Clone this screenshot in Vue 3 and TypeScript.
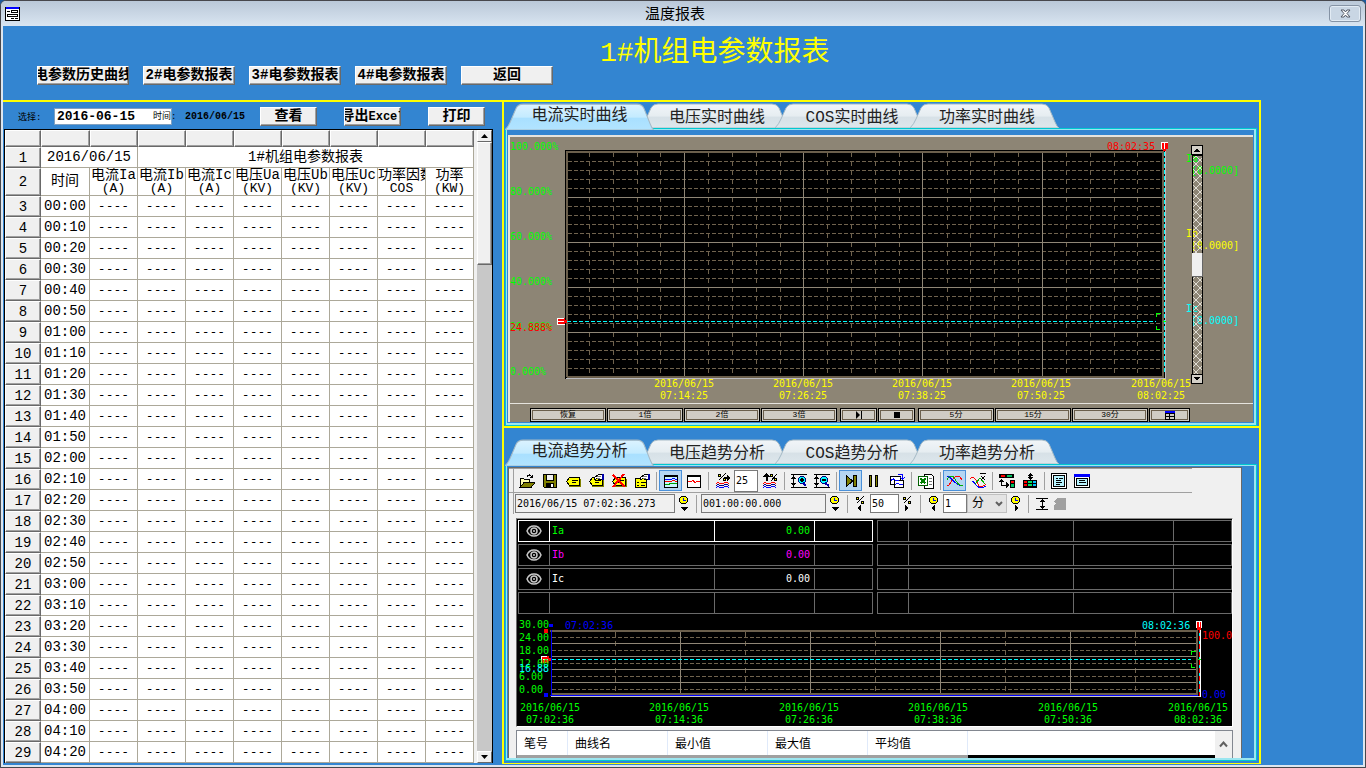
<script setup lang="ts">
import { ref } from 'vue'

type Shape = { d: string; f?: string; s?: string; w?: number }

const navButtons = ['电参数历史曲线', '2#电参数报表', '3#电参数报表', '4#电参数报表', '返回']
const columns = [
  ['电流Ia', '(A)'], ['电流Ib', '(A)'], ['电流Ic', '(A)'],
  ['电压Ua', '(KV)'], ['电压Ub', '(KV)'], ['电压Uc', '(KV)'],
  ['功率因数', 'COS'], ['功率', '(KW)'],
]
const rows = Array.from({ length: 27 }, (_, i) => {
  const h = String(Math.floor(i / 6)).padStart(2, '0')
  return { no: i + 3, time: `${h}:${i % 6}0` }
})

const liveTabs = ['电流实时曲线', '电压实时曲线', 'COS实时曲线', '功率实时曲线']
const trendTabs = ['电流趋势分析', '电压趋势分析', 'COS趋势分析', '功率趋势分析']
const liveTab = ref(0)
const trendTab = ref(0)

const selectedDate = ref('2016-06-15')
const percent = ref('25')
const startTime = ref('2016/06/15 07:02:36.273')
const span = ref('001:00:00.000')
const shift = ref('50')
const step = ref('1')
const unit = ref('分')

const range = (n: number) => Array.from({ length: n }, (_, i) => i)
const liveMinorX = range(25).filter(i => i % 5 !== 0).map(i => 565 + Math.round(i * 23.85))
const liveMajorX = [684, 803, 922, 1042]
const liveMinorY = range(25).filter(i => i % 5 !== 0).map(i => 152 + i * 9)
const liveMajorY = [197, 242, 287, 332]
const liveLabels = [
  { t: '100.000%', y: 150 }, { t: '80.000%', y: 195 }, { t: '60.000%', y: 240 },
  { t: '40.000%', y: 285 }, { t: '20.000%', y: 330 }, { t: '0.000%', y: 375 },
]
const liveTimes = [
  { x: 684, t: '07:14:25' }, { x: 803, t: '07:26:25' }, { x: 922, t: '07:38:25' },
  { x: 1041, t: '07:50:25' }, { x: 1161, t: '08:02:25' },
]
const pens = [
  { n: 'Ia', y: 162, c: '#00ff00' }, { n: 'Ib', y: 237, c: '#ffff00' }, { n: 'Ic', y: 312, c: '#00ffff' },
]
const zoomButtons = ['恢复', '1倍', '2倍', '3倍']
const spanButtons = ['5分', '15分', '30分']

const trendLabels = [
  { t: '30.00', y: 628 }, { t: '24.00', y: 641 }, { t: '18.00', y: 654 },
  { t: '12.00', y: 667 }, { t: '6.00', y: 680 }, { t: '0.00', y: 693 },
]
const trendTimes = [
  { x: 550, t: '07:02:36' }, { x: 679, t: '07:14:36' }, { x: 809, t: '07:26:36' },
  { x: 938, t: '07:38:36' }, { x: 1068, t: '07:50:36' }, { x: 1198, t: '08:02:36' },
]
const curves = [
  { n: 'Ia', v: '0.00', c: '#00ff00' }, { n: 'Ib', v: '0.00', c: '#ff00ff' },
  { n: 'Ic', v: '0.00', c: '#ffffff' }, { n: '', v: '', c: '#ffffff' },
]
const listHead = ['笔号', '曲线名', '最小值', '最大值', '平均值']

const clock: Shape[] = [
  { d: 'M5.5 0.500h4l2 2v3l-2 2h-4l-2-2v-3z', f: '#ffff00', s: '#000' },
  { d: 'M7.5 2v2.500h2', s: '#0000ff' },
]
const tag: Shape[] = [
  { d: 'M1.5 8.500l3-4h10v8h-10z', f: '#ffff00', s: '#000' },
  { d: 'M4 13.500h11.500v-8', s: '#808000' },
  { d: 'M7 7.500h6M7 9.500h4', s: '#000' },
]
const pencil: Shape[] = [
  { d: 'M6.5 4.500l4-3h3l1 1v4h-3l-2-1-3 1z', f: '#fff', s: '#000' },
  { d: 'M14 1h2v6h-2z', f: '#0000aa' },
  { d: 'M9 3.500h4M9 5.500h3', s: '#777' },
]
const percentMark: Shape[] = [
  { d: 'M3.5 1.500h2v2h-2zM8.500 5.500h2v2h-2z', f: '#ffff00', s: '#000' },
  { d: 'M10.5 0.500l-7 7', s: '#000' },
]
const waves: Shape[] = [
  { d: 'M1 10.500c3-3 4 2 7 0s4-1 6 0', s: '#ff0000' },
  { d: 'M1 12.500c3-3 4 2 7 0s4-1 6 0', s: '#000080' },
  { d: 'M1 14.500c3-3 4 2 7 0s4-1 6 0', s: '#0000ff' },
]
const icons: Record<string, Shape[]> = {
  open: [
    { d: 'M1.5 14V5.500h3l1 1h5v3', f: '#ffffb0', s: '#000' },
    { d: 'M1 14.500l4-5h11l-4 5z', f: '#808000', s: '#000' },
    { d: 'M8 3.500c2-3 4-1 5 1M13.500 1.500v3h-3', s: '#000' },
  ],
  save: [
    { d: 'M1.5 1.500h13v13h-12l-1-1z', f: '#808000', s: '#000' },
    { d: 'M4.5 1.500h7v6h-7z', f: '#f0f0f0', s: '#000' },
    { d: 'M4 10h8v5h-8z', f: '#000' }, { d: 'M9 11h2v3h-2z', f: '#fff' },
  ],
  tag,
  edit: [...tag, ...pencil],
  remove: [...tag, { d: 'M2 2l12 12M13 1l-11 13', s: '#ff0000', w: 2 }],
  props: [
    { d: 'M1.5 5.500h11v9h-11z', f: '#ffff00', s: '#000' },
    { d: 'M3 9.500h2M7 9.500h5M3 12.500h2M7 12.500h4', s: '#000' }, ...pencil,
  ],
  multi: [
    { d: 'M1.5 2.500h13v12h-13z', f: '#c8f4ff', s: '#000' }, { d: 'M1 3h14', s: '#000', w: 2 },
    { d: 'M2 7l3-1 3 1 2-2 4 2', s: '#0000ff' }, { d: 'M2 9l3-1 3 1 2-2 4 2', s: '#ff0000' },
    { d: 'M2 11l3 1 3-2 2 1 4-1', s: '#00a000' },
  ],
  single: [
    { d: 'M1.5 2.500h13v12h-13z', f: '#fff', s: '#000' }, { d: 'M1 3h14', s: '#000', w: 2 },
    { d: 'M2 8.500h3l2-1 2 2 2-1h3', s: '#ff0000' },
  ],
  pctRight: [...percentMark, { d: 'M9 4h3v-2l3 3-3 3v-2h-3z', f: '#000' }, ...waves],
  pctUp: [
    { d: 'M1 4l3.500-4 3.500 4h-2.500v4h-2v-4z', f: '#000' },
    { d: 'M8.500 1.500h2v2h-2zM12.500 5.500h2v2h-2z', f: '#ffff00', s: '#000' }, { d: 'M15 1l-6 7', s: '#000' }, ...waves,
  ],
  zoomIn: [
    { d: 'M0 1.500h16M0 14.500h16M2.500 2v12', s: '#000' }, { d: 'M0 6l2.500-3 2.500 3zM0 10l2.500 3 2.500-3z', f: '#000' },
    { d: 'M9.5 3.500h3l2 2v3l-2 2h-3l-2-2v-3z', f: '#00ffff', s: '#000080' }, { d: 'M9 7h4M11 5v4', s: '#000', w: 2 },
    { d: 'M12 10l3 3', s: '#0000aa', w: 2 },
  ],
  zoomOut: [
    { d: 'M0 1.500h16M0 14.500h16M2.500 2v12', s: '#000' }, { d: 'M0 6l2.500-3 2.500 3zM0 10l2.500 3 2.500-3z', f: '#000' },
    { d: 'M8.5 3.500h3l2 2v3l-2 2h-3l-2-2v-3z', f: '#00ffff', s: '#000080' }, { d: 'M8 7h4', s: '#000', w: 2 },
    { d: 'M11 10l4 3', s: '#0000aa', w: 2 },
  ],
  play: [
    { d: 'M3.5 2.500v11l6-5.500z', f: '#808000', s: '#000' }, { d: 'M10.5 2.500h3v11h-3z', f: '#808000', s: '#000' },
  ],
  pause: [
    { d: 'M3.5 2.500h2v11h-2z', f: '#808000', s: '#000' }, { d: 'M9.5 2.500h2v11h-2z', f: '#808000', s: '#000' },
  ],
  copy: [
    { d: 'M1.5 3.500h10v8h-10z', f: '#fff', s: '#000' }, { d: 'M5.5 7.500h9v7h-9z', f: '#fff', s: '#000' },
    { d: 'M2 8c3-6 4 3 8-1M6 12c3-5 5 3 8-1', s: '#0000ff' },
    { d: 'M9 1.500h4.500v3M11 4l2.500 2 2.500-2', s: '#0000ff' },
  ],
  excel: [
    { d: 'M6.5 1.500h7l2 2v12h-9z', f: '#fff', s: '#000' }, { d: 'M11 5.500h3M11 8.500h3M11 11.500h3', s: '#777' },
    { d: 'M0.5 3.500h9v9h-9z', f: '#fff', s: '#006000' }, { d: 'M2.5 5.500l5 5M7.500 5.500l-5 5', s: '#008000', w: 2 },
  ],
  cross: [
    { d: 'M0 13c4 0 5-10 10-10 3 0 4 2 5 4', s: '#ff0000' },
    { d: 'M0 3c5 0 7 10 16 10', s: '#0000ff' }, { d: 'M0 7c2-5 6-5 8-1s4 7 8 7', s: '#00b000' },
  ],
  mean: [
    { d: 'M0 6c4-4 7 2 8 5s4 4 8 0', s: '#ff0000' }, { d: 'M2 8c2 0 5 7 9 7s4-2 5-2', s: '#0000ff' },
    { d: 'M5 11l5-6 5 6', s: '#00b000' }, { d: 'M10 0.500h6M11 3l4 4M15 3l-4 4', s: '#000' },
  ],
  move: [
    { d: 'M0 1h15v4h-15zM11 7h5v8h-5z', f: '#000' }, { d: 'M2 2h4v2h-4zM12 8h3v2h-3z', f: '#ff0000' },
    { d: 'M8 2h5v2h-5zM12 11h3v3h-3z', f: '#00c060' }, { d: 'M2.5 7v5h7', s: '#000' },
    { d: 'M0 9l2.500-3 2.500 3zM7 9l4 3-4 3z', f: '#000' },
  ],
  grid: [
    { d: 'M1 7h14v8h-14z', f: '#000' }, { d: 'M2 8h3v2h-3zM2 11h3v2h-3z', f: '#ff0000' },
    { d: 'M6 8h4v2h-4zM6 11h4v2h-4z', f: '#00e060' }, { d: 'M11 8h3v2h-3zM11 11h3v2h-3z', f: '#00c0ff' },
    { d: 'M7 1h2v5h-2z', f: '#000' }, { d: 'M5 3l3-3 3 3zM5 4l3 3 3-3z', f: '#000' },
  ],
  page: [
    { d: 'M0.5 0.500h15v15h-15z', f: '#fff', s: '#000' }, { d: 'M2.5 2.500h11v11h-11z', f: '#b8f4ff', s: '#000' },
    { d: 'M5 5.500h2M8 5.500h4M5 7.500h5M5 9.500h6M5 11.500h4', s: '#000' },
  ],
  dialog: [
    { d: 'M0.5 1.500h15v13h-15z', f: '#fff', s: '#000' }, { d: 'M0 1h16v3h-16z', f: '#0000ff' },
    { d: 'M2.5 5.500h11v7h-11z', f: '#b8f4ff', s: '#000' }, { d: 'M5 7.500h6M5 9.500h7', s: '#000' },
  ],
  clockDown: [...clock, { d: 'M4 11h8l-4 4z', f: '#000' }],
  clockLeft: [...clock, { d: 'M9 9v6l-4-3z', f: '#000' }],
  clockRight: [...clock, { d: 'M7 9v6l4-3z', f: '#000' }],
  pctLeft: [...percentMark, { d: 'M8 9v6l-4-3z', f: '#000' }],
  pctNext: [...percentMark, { d: 'M5 9v6l4-3z', f: '#000' }],
  fit: [
    { d: 'M2 2.500h12M2 13.500h12M8.500 3v10', s: '#000' }, { d: 'M5 6l3.500-3 3.500 3zM5 10l3.500 3 3.500-3z', f: '#000' },
  ],
  label: [
    { d: 'M5 2h9v12h-12v-5l2-1-2-2z', f: '#a0a0a0' },
  ],
}

const barOne = [
  'open', 'save', 'tag', 'edit', 'remove', 'props', '|', 'multi*', 'single', '|', 'pctRight', '#', 'pctUp', '|',
  'zoomIn', 'zoomOut', '|', 'play*', 'pause', 'copy', '|', 'excel', '|', 'cross*', 'mean', '|', 'move', 'grid', '|',
  'page', 'dialog',
].map(k => ({ key: k.replace('*', ''), on: k.endsWith('*') }))
</script>

<template>
  <div class="window">
    <header class="titlebar">
      <svg class="app-icon" width="15" height="14" viewBox="0 0 15 14" shape-rendering="crispEdges">
        <rect width="15" height="14" fill="#000" /><rect x="1" y="2" width="13" height="11" fill="#fff" />
        <rect x="1" width="13" height="2" fill="#0000ff" />
        <path d="M2 4h3v1h-3zM6 3h7v3h-7zM2 7h11v3h-11zM6 11h3v1h-3zM10 11h3v1h-3z" fill="#000" />
        <path d="M7 4h5v1h-5zM3 8h9v1h-9z" fill="#fff" />
      </svg>
      <span class="window-title">温度报表</span>
      <button class="close" aria-label="关闭">
        <svg width="11" height="9" viewBox="0 0 11 9"><path d="M1 1h3l1.500 2L7 1h3L7 4.500 10 8H7L5.500 6 4 8H1l3-3.500z" fill="#fff" stroke="#555a66" /></svg>
      </button>
    </header>

    <div class="body">
      <div class="head">
        <nav class="nav">
          <button v-for="b in navButtons" :key="b" class="raised"><span>{{ b }}</span></button>
        </nav>
        <h1>1#机组电参数报表</h1>
      </div>

      <main class="main">
        <section class="left">
          <div class="query">
            <label class="tiny pick" for="day">选择:</label>
            <div class="day">
              <input id="day" v-model="selectedDate" type="text">
              <span class="tiny over">时间:</span>
            </div>
            <span class="today">2016/06/15</span>
            <button class="raised small"><span>查看</span></button>
            <button class="raised small"><span>导出<b class="latin">Excel</b></span></button>
            <button class="raised small"><span>打印</span></button>
          </div>
          <div class="sheet">
            <div class="sheet-view">
              <table class="report">
                <colgroup><col class="c-no"><col class="c-time"><col v-for="c in columns" :key="c[0]" class="c-val"></colgroup>
                <thead>
                  <tr class="r-head"><th v-for="i in 10" :key="i" /></tr>
                </thead>
                <tbody>
                  <tr class="r-line"><th>1</th><td colspan="2">2016/06/15</td><td colspan="7">1#机组电参数报表</td></tr>
                  <tr class="r-names">
                    <th>2</th><td>时间</td>
                    <td v-for="c in columns" :key="c[0]"><div class="name">{{ c[0] }}</div><div class="unit">{{ c[1] }}</div></td>
                  </tr>
                  <tr v-for="r in rows" :key="r.no" class="r-line">
                    <th>{{ r.no }}</th><td>{{ r.time }}</td><td v-for="c in columns" :key="c[0]" class="dash">----</td>
                  </tr>
                </tbody>
              </table>
            </div>
            <div class="scroll">
              <button class="arrow" aria-label="上"><svg width="7" height="4" viewBox="0 0 7 4"><path d="M0 4l3.500-4L7 4z" /></svg></button>
              <div class="thumb" />
              <div class="track" />
              <button class="arrow" aria-label="下"><svg width="7" height="4" viewBox="0 0 7 4"><path d="M0 0l3.500 4L7 0z" /></svg></button>
            </div>
          </div>
        </section>

        <div class="right">
          <section class="panel live">
            <div class="tabs">
              <button v-for="(t, i) in liveTabs" :key="t" class="tab" :class="{ on: liveTab === i }" @click="liveTab = i">
                <svg viewBox="0 0 149 26" preserveAspectRatio="none">
                  <defs>
                    <linearGradient id="tab-on" x2="0" y2="1"><stop offset="0" stop-color="#dcf3ff" /><stop offset=".5" stop-color="#c4ebff" /><stop offset=".55" stop-color="#a9e0ff" /><stop offset="1" stop-color="#b2e4ff" /></linearGradient>
                    <linearGradient id="tab-off" x2="0" y2="1"><stop offset="0" stop-color="#f1f5f8" /><stop offset=".5" stop-color="#e6edf1" /><stop offset=".55" stop-color="#d7e1e7" /><stop offset="1" stop-color="#dde7ec" /></linearGradient>
                  </defs>
                  <path d="M0 26Q4 22 6 17L11 6Q13 2 18 2H132Q137 2 139 6L145 20Q147 25 149 26z" :fill="liveTab === i ? 'url(#tab-on)' : 'url(#tab-off)'" stroke="#a5bac6" />
                </svg>
                <span>{{ t }}</span>
              </button>
            </div>
            <div class="frame">
              <div class="live-box">
                <svg class="chart" viewBox="510 137 743 266">
                  <defs>
                    <pattern id="hatch" width="8" height="8" patternUnits="userSpaceOnUse">
                      <path d="M0 0l8 8M8 0l-8 8" stroke="#e0ddd4" stroke-width="1" />
                    </pattern>
                  </defs>
                  <g shape-rendering="crispEdges">
                    <rect x="565" y="150" width="600" height="229" fill="#000" />
                    <path d="M567 377V152H1164" fill="none" stroke="#6b5f4c" stroke-width="2" />
                    <path d="M567 377H1163V153" fill="none" stroke="#6b5f4c" stroke-width="2" />
                    <path d="M566 378.500H1165.500V150" fill="none" stroke="#b9b9bd" />
                    <path v-for="x in liveMinorX" :key="'a' + x" :d="`M${x + 0.5} 153V376`" stroke="#70634e" stroke-dasharray="4 5" />
                    <path v-for="y in liveMinorY" :key="'b' + y" :d="`M568 ${y + 0.5}H1162`" stroke="#70634e" stroke-dasharray="4 2" />
                    <path v-for="x in liveMajorX" :key="'c' + x" :d="`M${x + 0.5} 153V376`" stroke="#8f8676" />
                    <path v-for="y in liveMajorY" :key="'d' + y" :d="`M568 ${y + 0.5}H1162`" stroke="#8f8676" />
                    <path d="M567 321.500H1156" stroke="#00ffff" stroke-dasharray="4 2" />
                    <path d="M1164.500 152V374" stroke="#00ffff" stroke-dasharray="4 2" />
                    <path d="M1161 313.500H1156.500V317M1156.500 326V329.500H1160M1163 321.500h3" fill="none" stroke="#00ff00" />
                    <path d="M1161 142h7v7h-2v2h-3v-2h-2z" fill="#ff0000" /><path d="M1161.500 149v-6.500h6M1164.500 143v6" fill="none" stroke="#fff" />
                    <path d="M557 318h8v2h2v3h-2v2h-8z" fill="#ff0000" /><path d="M564 318.500h-6.500v6h7M558 321.500h6" fill="none" stroke="#fff" />
                  </g>
                  <g class="t">
                    <text v-for="l in liveLabels" :key="l.t" x="510" :y="l.y" fill="#00ff00">{{ l.t }}</text>
                    <text x="510" y="331" fill="#ff0000">24.888%</text>
                    <text x="1107" y="150" fill="#ff0000">08:02:35</text>
                    <g v-for="l in liveTimes" :key="l.t" fill="#ffff00" text-anchor="middle">
                      <text :x="l.x" y="387">2016/06/15</text><text :x="l.x" y="399">{{ l.t }}</text>
                    </g>
                    <g v-for="p in pens" :key="p.n" :fill="p.c">
                      <text x="1186" :y="p.y">{{ p.n }}</text><text x="1191" :y="p.y + 12">[0.0000]</text>
                    </g>
                  </g>
                  <g shape-rendering="crispEdges">
                    <rect x="1192.500" y="155.500" width="10" height="219" fill="url(#hatch)" stroke="#000" />
                    <rect x="1192" y="253" width="11" height="23" fill="#f0f0f0" /><path d="M1192 276.500h10.500V253" fill="none" stroke="#666" />
                    <path d="M1191.500 145.500h11v9h-11zM1191.500 374.500h11v9h-11z" fill="#d4d0c8" stroke="#000" />
                    <path d="M1194 152l3-4 3 4zM1194 377l3 4 3-4z" />
                  </g>
                </svg>
                <div class="live-bar">
                  <button v-for="b in zoomButtons" :key="b" class="flat">{{ b }}</button>
                  <button class="flat narrow first" aria-label="前进"><svg width="8" height="8" viewBox="0 0 8 8"><path d="M1 0l4 4-4 4zM6 0h1v8H6z" /></svg></button>
                  <button class="flat narrow last" aria-label="停止"><svg width="6" height="6"><rect width="6" height="6" /></svg></button>
                  <button v-for="b in spanButtons" :key="b" class="flat">{{ b }}</button>
                  <button class="flat table-key" aria-label="表格"><svg width="10" height="9" shape-rendering="crispEdges"><rect width="10" height="9" /><path d="M1 3h3v2H1zM5 3h4v2H5zM1 6h3v2H1zM5 6h4v2H5z" fill="#d0ccc4" /><rect width="10" height="2" fill="#00f" /></svg></button>
                </div>
              </div>
            </div>
          </section>

          <section class="panel trend">
            <div class="tabs">
              <button v-for="(t, i) in trendTabs" :key="t" class="tab" :class="{ on: trendTab === i }" @click="trendTab = i">
                <svg viewBox="0 0 149 26" preserveAspectRatio="none">
                  <path d="M0 26Q4 22 6 17L11 6Q13 2 18 2H132Q137 2 139 6L145 20Q147 25 149 26z" :fill="trendTab === i ? 'url(#tab-on)' : 'url(#tab-off)'" stroke="#a5bac6" />
                </svg>
                <span>{{ t }}</span>
              </button>
            </div>
            <div class="frame">
              <div class="trend-box">
                <div class="bar bar-one">
                  <template v-for="(b, n) in barOne" :key="n">
                    <i v-if="b.key === '|'" class="sep" />
                    <input v-else-if="b.key === '#'" v-model="percent" class="field pct" aria-label="百分比">
                    <button v-else class="tool" :class="{ pressed: b.on }" :aria-label="b.key">
                      <svg width="16" height="16" viewBox="0 0 16 16">
                        <path v-for="(p, k) in icons[b.key]" :key="k" :d="p.d" :fill="p.f || 'none'" :stroke="p.s || 'none'" :stroke-width="p.w || 1" />
                      </svg>
                    </button>
                  </template>
                </div>
                <div class="bar bar-two">
                  <input v-model="startTime" class="field grey start" aria-label="开始时间">
                  <button class="tool" aria-label="选择时间"><svg width="16" height="16"><path v-for="(p, k) in icons.clockDown" :key="k" :d="p.d" :fill="p.f || 'none'" :stroke="p.s || 'none'" /></svg></button>
                  <i class="sep" />
                  <input v-model="span" class="field grey length" aria-label="时间长度">
                  <button class="tool" aria-label="选择长度"><svg width="16" height="16"><path v-for="(p, k) in icons.clockDown" :key="k" :d="p.d" :fill="p.f || 'none'" :stroke="p.s || 'none'" /></svg></button>
                  <i class="sep" />
                  <button class="tool" aria-label="左移"><svg width="16" height="16"><path v-for="(p, k) in icons.pctLeft" :key="k" :d="p.d" :fill="p.f || 'none'" :stroke="p.s || 'none'" /></svg></button>
                  <input v-model="shift" class="field move" aria-label="移动比例">
                  <button class="tool" aria-label="右移"><svg width="16" height="16"><path v-for="(p, k) in icons.pctNext" :key="k" :d="p.d" :fill="p.f || 'none'" :stroke="p.s || 'none'" /></svg></button>
                  <i class="sep" />
                  <button class="tool" aria-label="后退"><svg width="16" height="16"><path v-for="(p, k) in icons.clockLeft" :key="k" :d="p.d" :fill="p.f || 'none'" :stroke="p.s || 'none'" /></svg></button>
                  <input v-model="step" class="field pct" aria-label="步长">
                  <div class="unit-pick">
                    <select v-model="unit" aria-label="单位"><option>分</option></select>
                    <svg width="8" height="6" viewBox="0 0 8 6"><path d="M1 1l3 3 3-3" fill="none" stroke="#606060" stroke-width="2" /></svg>
                  </div>
                  <button class="tool" aria-label="前进"><svg width="16" height="16"><path v-for="(p, k) in icons.clockRight" :key="k" :d="p.d" :fill="p.f || 'none'" :stroke="p.s || 'none'" /></svg></button>
                  <i class="sep" />
                  <button class="tool" aria-label="适应"><svg width="16" height="16"><path v-for="(p, k) in icons.fit" :key="k" :d="p.d" :fill="p.f || 'none'" :stroke="p.s || 'none'" /></svg></button>
                  <button class="tool" aria-label="标签"><svg width="16" height="16"><path v-for="(p, k) in icons.label" :key="k" :d="p.d" :fill="p.f" /></svg></button>
                </div>

                <div class="screen">
                  <div class="pens">
                    <table v-for="side in 2" :key="side" class="pen-table">
                      <colgroup><col class="p-eye"><col><col class="p-val"><col class="p-end"></colgroup>
                      <tbody>
                        <tr v-for="(c, i) in curves" :key="i" :class="{ chosen: side === 1 && i === 0 }">
                          <td>
                            <svg v-if="side === 1 && c.n" class="eye" width="16" height="12" viewBox="0 0 16 12"><path d="M1 6Q3 1 8 1T15 6Q13 11 8 11T1 6z" fill="none" stroke="#c8c8c8" stroke-width="1.500" /><circle cx="8" cy="6" r="3" fill="none" stroke="#c8c8c8" stroke-width="1.500" /><circle cx="8" cy="6" r="1" fill="#c8c8c8" /></svg>
                          </td>
                          <td :style="{ color: c.c }">{{ side === 1 ? c.n : '' }}</td>
                          <td class="num" :style="{ color: c.c }">{{ side === 1 ? c.v : '' }}</td>
                          <td />
                        </tr>
                      </tbody>
                    </table>
                  </div>
                  <svg class="chart" viewBox="517 615 715 111">
                    <g shape-rendering="crispEdges" fill="none">
                      <path v-for="i in 5" :key="'m' + i" :d="`M${485.5 + i * 130} 632V695`" stroke="#70634e" stroke-dasharray="5 4" />
                      <path v-for="i in 5" :key="'n' + i" :d="`M552 ${624.5 + i * 13}H1197`" stroke="#70634e" stroke-dasharray="4 2" />
                      <path v-for="i in 4" :key="'p' + i" :d="`M${550.5 + i * 130} 632V695`" stroke="#8f8676" />
                      <path v-for="i in 4" :key="'q' + i" :d="`M552 ${630.5 + i * 13}H1197`" stroke="#8f8676" />
                      <path d="M550 631H1198M1197 632V695M551 694H1197" stroke="#6b5f4c" stroke-width="2" />
                      <path d="M550.500 696.500H1200" stroke="#c8c8d0" /><path d="M550 695.500H1198M551.500 630V696" stroke="#0000ff" />
                      <path d="M552 659.500H1191" stroke="#00ffff" stroke-dasharray="4 2" />
                      <path d="M1200.500 630V697" stroke="#fff" /><path d="M1199.500 630V696" stroke="#ff0000" />
                      <path d="M1199.500 633V696" stroke="#00ffff" stroke-dasharray="3 5" />
                      <path d="M1196 651.500H1191.500V655M1191.500 664V667.500H1195M1198 659.500h3" stroke="#00ff00" />
                      <path d="M1196 621h6v7h-1v2h-4v-2h-1z" fill="#ff0000" /><path d="M1196.500 628v-6.500h5v6M1199.500 622v5" stroke="#fff" />
                      <path d="M542 656h7v2h2v3h-2v2h-7z" fill="#ff0000" /><path d="M547 656.500h-5.500v6M543 659.500h5" stroke="#fff" />
                      <path d="M549 624h4v3h-4zM544 693h4v4h-4z" fill="#0000ff" /><path d="M544 629h4v4h-4z" fill="#ff0000" />
                    </g>
                    <g class="t">
                      <text v-for="l in trendLabels" :key="l.t" x="519" :y="l.y" fill="#00ff00">{{ l.t }}</text>
                      <text x="519" y="672" fill="#00ffff">16.88</text>
                      <text x="565" y="629" fill="#0000ff">07:02:36</text>
                      <text x="1142" y="629" fill="#00ffff">08:02:36</text>
                      <text x="1202" y="639" fill="#ff0000">100.0</text>
                      <text x="1202" y="698" fill="#0000ff">0.00</text>
                      <g v-for="l in trendTimes" :key="l.t" fill="#00ff00" text-anchor="middle">
                        <text :x="l.x" y="711">2016/06/15</text><text :x="l.x" y="723">{{ l.t }}</text>
                      </g>
                    </g>
                  </svg>
                </div>

                <div class="list">
                  <div class="list-main">
                    <table class="list-head"><thead><tr><th v-for="(h, i) in listHead" :key="h" :class="{ short: i === 0 }">{{ h }}</th><th class="rest" /></tr></thead></table>
                    <div class="list-body"><div class="list-blank" /></div>
                  </div>
                  <button class="up" aria-label="向上"><svg width="9" height="7" viewBox="0 0 9 7"><path d="M1 5.500l3.500-4 3.500 4" fill="none" stroke="#606060" stroke-width="2" /></svg></button>
                </div>
              </div>
            </div>
          </section>
        </div>
      </main>
    </div>
  </div>
</template>

<style>
html { background: #1d5a9c; }
body { overflow: hidden; }
</style>

<style scoped>
* { box-sizing: border-box; }
button, input, select { font: inherit; padding: 0; margin: 0; border: 0; border-radius: 0; color: #000; }
button { display: flex; align-items: center; justify-content: center; }
.window {
  height: 100vh; display: flex; flex-direction: column;
  border: 1px solid #47474c; border-radius: 6px 6px 0 0; background: #dde6ef;
  font-family: "Liberation Mono", "Noto Sans CJK SC", monospace; font-size: 14px; color: #000; overflow: hidden;
}
.titlebar {
  flex: 0 0 25px; display: grid; grid-template-columns: 1fr auto 1fr; align-items: center;
  padding: 0 4px; background: linear-gradient(#bac8d8, #d9e5f1);
}
.window-title { font-size: 15px; line-height: 20px; padding: 4px 16px 0 0; }
.close { justify-self: end; width: 32px; height: 17px; border: 1px solid #8593a5; border-radius: 3px; background: #c9d6e4; box-shadow: inset 0 0 0 1px #e2ebf4; }
.body { flex: 1; min-height: 0; margin: 0 2px 2px; background: #3385d1; display: flex; flex-direction: column; }
.head { flex: 0 0 74px; display: flex; align-items: flex-start; padding-left: 34px; }
.nav { display: flex; gap: 14px; margin-top: 40px; }
.raised {
  width: 92px; height: 19px; overflow: hidden; background: #f0f0f0; font-weight: bold; font-size: 14px; line-height: 17px; white-space: nowrap;
  border: 1px solid; border-color: #fff #696969 #696969 #fff; box-shadow: inset -1px -1px 0 #a0a0a0;
}
.raised span { flex: none; }
.small { width: 57px; flex: none; }
.small + .small { margin-left: 27px; }
.latin { font-size: 12px; }
h1 { margin: 11px 0 0 47px; font-size: 28px; line-height: 34px; font-weight: normal; color: #ffff00; white-space: nowrap; }
.main { flex: 1; min-height: 0; display: grid; grid-template-columns: 499px minmax(0, 1fr); margin-right: 102px; }

.left { display: flex; flex-direction: column; min-height: 0; border-top: 2px solid #ffff00; }
.query { flex: 0 0 27px; display: flex; align-items: center; padding: 2px 0 0 15px; }
.tiny { font-size: 9px; }
.pick { width: 36px; }
.day { position: relative; width: 118px; height: 17px; }
.day input { width: 100%; height: 17px; padding-left: 2px; background: #fff; border: 1px solid #7fa0c0; font-size: 13px; font-weight: bold; }
.over { position: absolute; left: 99px; top: 3px; line-height: 12px; white-space: nowrap; }
.today { width: 75px; margin-left: 13px; font-size: 10px; font-weight: bold; }
.sheet { flex: 1; min-height: 0; display: flex; margin: 0 9px 2px 1px; border: 1px solid #000; border-bottom: 0; background: #f0f0f0; overflow: hidden; }
.sheet-view { flex: 1; overflow: hidden; }
.report { width: 469px; table-layout: fixed; border-collapse: separate; border-spacing: 0; }
.c-no { width: 36px; } .c-time { width: 49px; } .c-val { width: 48px; }
.report th { padding: 0; font-weight: normal; background: #f0f0f0; border: 1px solid; border-color: #fff #696969 #696969 #fff; box-shadow: inset -1px -1px 0 #a0a0a0; }
.report td { padding: 0; background: #fff; text-align: center; border-right: 1px solid #aca899; border-bottom: 1px solid #aca899; overflow: hidden; white-space: nowrap; }
.r-head th { height: 17px; }
.r-line th, .r-line td { height: 21px; line-height: 18px; }
.r-names th, .r-names td { height: 28px; line-height: 13px; }
.report .dash { font-family: "DejaVu Sans Mono", monospace; font-size: 13px; }
.name { font-size: 14px; line-height: 14px; height: 14px; }
.unit { font-size: 13px; line-height: 13px; height: 13px; }
.scroll { flex: 0 0 15px; display: flex; flex-direction: column; }
.arrow { flex: 0 0 12px; background: #f0f0f0; border: 1px solid; border-color: #fff #696969 #696969 #fff; }
.thumb { flex: 0 0 123px; background: #f0f0f0; border: 1px solid; border-color: #fff #696969 #696969 #fff; box-shadow: inset -1px -1px 0 #a0a0a0; }
.track { flex: 1; background: #c8c8c8; }

.right { display: flex; flex-direction: column; min-width: 0; min-height: 0; }
.panel { border: 2px solid #ffff00; display: flex; flex-direction: column; }
.trend { flex: 1; min-height: 0; border-top: 0; border-bottom-width: 1px; margin-bottom: 1px; }
.tabs { display: flex; padding-left: 1px; flex: none; }
.trend .tabs { padding-top: 10px; }
.tab { position: relative; width: 149px; height: 26px; background: none; font-size: 16px; line-height: 20px; padding: 6px 0 0 5px; white-space: nowrap; color: #222; }
.tab + .tab { margin-left: -14px; }
.tab svg { position: absolute; inset: 0; width: 100%; height: 100%; }
.tab span { position: relative; }
.tab.on { z-index: 1; height: 28px; margin-bottom: -2px; padding: 0; }
.frame { margin: 0 2px 0 1px; border: 1px solid #00c8d0; box-shadow: inset 0 0 0 1px #9be6f0, inset -2px -2px 0 #9be6f0; padding: 6px 3px 3px 2px; }
.trend .frame { flex: 1; min-height: 0; padding: 2px 14px 2px 2px; margin-bottom: 2px; display: flex; }
.live-box { border: 2px solid #e6e4de; border-right: 0; border-bottom: 0; background: #8d8575; }
.chart { display: block; width: 100%; height: auto; }
.t { font-family: "DejaVu Sans Mono", "Liberation Mono", monospace; font-size: 10px; }
.live-bar { display: flex; gap: 1px; padding: 4px 0 0 20px; border-top: 1px solid #e6e4de; }
.flat { width: 76px; height: 14px; background: #d0ccc4; border: 1px solid #000; box-shadow: inset 0 0 0 1px #d0ccc4, inset 0 0 0 2px #6b5f4c; font-size: 8px; line-height: 10px; }
.narrow { width: 37px; }
.first { margin-left: 2px; }
.last { margin-right: 2px; }
.table-key { width: 41px; }

.trend-box { flex: 1; min-width: 0; display: flex; flex-direction: column; background: #f0f0f0; border: 1px solid #696969; border-bottom: 0; overflow: hidden; }
.bar { display: flex; align-items: center; flex: none; padding-left: 6px; margin-right: 49px; }
.bar-one { height: 25px; border-top: 1px solid #a0a0a0; border-bottom: 1px solid #a0a0a0; box-shadow: inset 4px 0 0 #f0f0f0, inset 5px 0 0 #a0a0a0; }
.bar-two { height: 21px; box-shadow: inset 4px 0 0 #f0f0f0, inset 5px 0 0 #a0a0a0; }
.tool { flex: 0 0 23px; height: 21px; background: none; }
.tool svg { flex: none; shape-rendering: crispEdges; }
.bar-two .tool { flex-basis: 18px; }
.pressed { background: #b5d5f2; border: 1px solid #4a90d9; }
.sep { flex: 0 0 6px; height: 18px; background: linear-gradient(90deg, transparent 3px, #a0a0a0 3px, #a0a0a0 4px, transparent 4px); }
.bar-two .sep { flex-basis: 8px; }
.field { height: 19px; padding: 0 1px; border: 1px solid #7a7a7a; background: #fff; font-family: "DejaVu Sans Mono", monospace; font-size: 10px; }
.bar-one .field { height: 22px; }
.grey { background: #f0f0f0; }
.pct { width: 24px; } .start { width: 160px; } .length { width: 125px; } .move { width: 29px; }
.unit-pick { position: relative; width: 40px; height: 19px; }
.unit-pick select { width: 100%; height: 100%; padding-left: 4px; appearance: none; background: #e4e4e4; border: 1px solid #c0c0c0; font-size: 12px; line-height: 16px; }
.unit-pick svg { position: absolute; right: 4px; top: 7px; }

.screen { flex: none; margin: 4px 8px 0 7px; background: #000; border: 1px solid; border-color: #8c8c8c #fff #fff #696969; }
.pens { display: flex; gap: 4px; padding: 0 0 0 1px; }
.pen-table { flex: 1 1 0; width: 0; table-layout: fixed; border-collapse: separate; border-spacing: 0 2px; margin: -1px 0; font-family: "DejaVu Sans Mono", monospace; font-size: 10px; line-height: 12px; }
.pen-table td { height: 22px; padding: 0 4px; border: 1px solid #6a6a6a; border-right: 0; }
.pen-table td:last-child { border-right: 1px solid #6a6a6a; }
.p-eye { width: 31px; } .p-val { width: 100px; } .p-end { width: 59px; }
.pen-table td:first-child { padding: 0; text-align: center; }
.pen-table td:nth-child(2) { padding: 0 2px; }
.pen-table .num { text-align: right; }
.pen-table .chosen td, .pen-table .chosen td:last-child { border-color: #fff; }
.eye { display: block; margin: 0 auto; }
.list { flex: 1; min-height: 0; display: flex; margin: 3px 8px 0 7px; border: 1px solid #828790; border-bottom: 0; background: #fff; overflow: hidden; }
.list-main { flex: 1; min-width: 0; }
.list-head { width: 100%; table-layout: fixed; border-spacing: 0; font-size: 12px; line-height: 16px; }
.list-head th { width: 100px; height: 24px; padding: 4px 0 0 7px; font-weight: normal; text-align: left; border-right: 1px solid #e0eafa; }
.list-head .short { width: 51px; }
.list-head .rest { width: auto; border: 0; }
.list-body { height: 20px; background: #000; }
.list-blank { width: 451px; height: 100%; background: #a0a0a0; }
.up { flex: 0 0 17px; background: #f0f0f0; }
</style>
